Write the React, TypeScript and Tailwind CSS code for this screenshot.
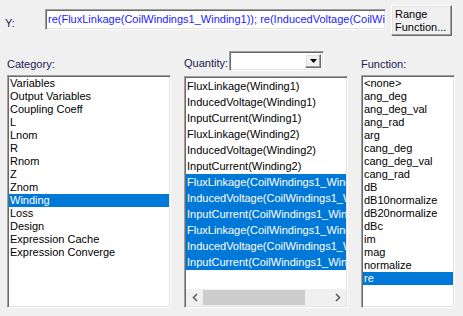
const categories = [
  "Variables",
  "Output Variables",
  "Coupling Coeff",
  "L",
  "Lnom",
  "R",
  "Rnom",
  "Z",
  "Znom",
  "Winding",
  "Loss",
  "Design",
  "Expression Cache",
  "Expression Converge",
]

const quantities = [
  "FluxLinkage(Winding1)",
  "InducedVoltage(Winding1)",
  "InputCurrent(Winding1)",
  "FluxLinkage(Winding2)",
  "InducedVoltage(Winding2)",
  "InputCurrent(Winding2)",
  "FluxLinkage(CoilWindings1_Winding1)",
  "InducedVoltage(CoilWindings1_Winding1)",
  "InputCurrent(CoilWindings1_Winding1)",
  "FluxLinkage(CoilWindings1_Winding2)",
  "InducedVoltage(CoilWindings1_Winding2)",
  "InputCurrent(CoilWindings1_Winding2)",
]

const functions = [
  "<none>",
  "ang_deg",
  "ang_deg_val",
  "ang_rad",
  "arg",
  "cang_deg",
  "cang_deg_val",
  "cang_rad",
  "dB",
  "dB10normalize",
  "dB20normalize",
  "dBc",
  "im",
  "mag",
  "normalize",
  "re",
]

const sunken =
  "border border-t-[#a0a0a0] border-l-[#a0a0a0] border-b-white border-r-white shadow-[inset_1px_1px_0_#696969,inset_-1px_-1px_0_#e3e3e3]"

const raised =
  "border border-t-white border-l-white border-b-[#696969] border-r-[#696969] shadow-[inset_-1px_-1px_0_#a0a0a0,inset_1px_1px_0_#e3e3e3]"

const Row = ({ text, selected, tall }: { text: string; selected?: boolean; tall?: boolean }) => (
  <div
    className={`${tall ? "h-[16px] leading-[16px]" : "h-[13px] leading-[13px]"} pl-[1px] whitespace-nowrap ${
      selected ? "bg-[#0078d7] text-white" : "text-black"
    }`}
  >
    {text}
  </div>
)

export default function App() {
  return (
    <div className="w-[463px] h-[316px] bg-[#f0f0f0] overflow-hidden text-[11px] font-['Liberation_Sans',Arial,sans-serif]">
      {/* Y expression row */}
      <div className="flex items-start pt-[5px] h-[50px]">
        <div className="w-[40px] ml-[5px] mt-[10px] text-[#202050]">Y:</div>
        <div className={`${sunken} bg-white mt-[4px] w-[341px] h-[21px] pl-[2px] overflow-hidden whitespace-nowrap leading-[19px] text-[#1c1cff]`}>
          re(FluxLinkage(CoilWindings1_Winding1)); re(InducedVoltage(CoilWindings1_Winding1)); re(InputCurrent(CoilWindings1_Winding1))
        </div>
        <button className={`${raised} bg-[#f0f0f0] ml-[5px] w-[61px] h-[31px] px-[3px] text-left leading-[13px] text-black`}>
          Range
          <br />
          Function...
        </button>
      </div>

      <div className="flex">
        {/* Category */}
        <div className="ml-[7px] w-[164px] flex flex-col">
          <div className="h-[25px] flex items-end pb-[3px] text-[#202050]">Category:</div>
          <div className={`${sunken} bg-white h-[233px] pt-[1px] px-[1px] overflow-hidden`}>
            {categories.map((c) => (
              <Row key={c} text={c} selected={c === "Winding"} />
            ))}
          </div>
        </div>

        {/* Quantity */}
        <div className="ml-[13px] w-[164px] flex flex-col">
          <div className="h-[26px] flex items-end pb-[5px]">
            <span className="text-[#202050] mr-[1px]">Quantity:</span>
            <div className={`${sunken} bg-white w-[95px] h-[20px] flex justify-end p-[2px]`}>
              <div className={`${raised} bg-[#f0f0f0] w-[16px] h-full flex items-center justify-center`}>
                <svg width="7" height="4" viewBox="0 0 7 4">
                  <path d="M0 0h7L3.5 4z" fill="#000" />
                </svg>
              </div>
            </div>
          </div>
          <div className={`${sunken} bg-white h-[232px] p-[1px] flex flex-col`}>
            <div className="flex-1 overflow-hidden">
              {quantities.map((q, i) => (
                <Row key={q} text={q} tall selected={i >= 6} />
              ))}
            </div>
            <div className="h-[17px] bg-[#f0f0f0] flex items-stretch">
              <div className="w-[17px] flex items-center justify-center">
                <svg width="6" height="9" viewBox="0 0 6 9">
                  <path d="M5 1L1.5 4.5L5 8" stroke="#606060" strokeWidth="1.6" fill="none" />
                </svg>
              </div>
              <div className="flex-1 flex items-center">
                <div className="w-[102px] h-[15px] bg-[#cdcdcd]" />
              </div>
              <div className="w-[17px] flex items-center justify-center">
                <svg width="6" height="9" viewBox="0 0 6 9">
                  <path d="M1 1L4.5 4.5L1 8" stroke="#606060" strokeWidth="1.6" fill="none" />
                </svg>
              </div>
            </div>
          </div>
        </div>

        {/* Function */}
        <div className="ml-[13px] w-[94px] flex flex-col">
          <div className="h-[25px] flex items-end pb-[3px] text-[#202050]">Function:</div>
          <div className={`${sunken} bg-white h-[233px] pt-[1px] px-[1px] overflow-hidden`}>
            {functions.map((f) => (
              <Row key={f} text={f} selected={f === "re"} />
            ))}
          </div>
        </div>
      </div>
    </div>
  )
}
